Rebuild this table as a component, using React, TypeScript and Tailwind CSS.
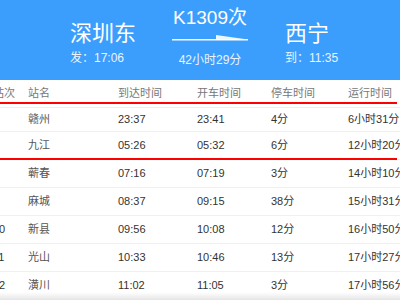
import React from 'react';

interface Stop {
  no: number;
  name: string;
  arrive: string;
  depart: string;
  stay: string;
  run: string;
}

const stops: Stop[] = [
  { no: 6, name: '赣州', arrive: '23:37', depart: '23:41', stay: '4分', run: '6小时31分' },
  { no: 7, name: '九江', arrive: '05:26', depart: '05:32', stay: '6分', run: '12小时20分' },
  { no: 8, name: '蕲春', arrive: '07:16', depart: '07:19', stay: '3分', run: '14小时10分' },
  { no: 9, name: '麻城', arrive: '08:37', depart: '09:15', stay: '38分', run: '15小时31分' },
  { no: 10, name: '新县', arrive: '09:56', depart: '10:08', stay: '12分', run: '16小时50分' },
  { no: 11, name: '光山', arrive: '10:33', depart: '10:46', stay: '13分', run: '17小时27分' },
  { no: 12, name: '潢川', arrive: '11:02', depart: '11:05', stay: '3分', run: '17小时56分' },
];

const cols = 'grid grid-cols-[35px_90px_79px_74px_77px_1fr] items-center -ml-[7px] whitespace-nowrap';

export default function App() {
  return (
    <div
      className="w-[400px] h-[300px] overflow-hidden bg-white relative"
      style={{ fontFamily: '"Liberation Sans", "Noto Sans CJK SC", sans-serif' }}
    >
      <header className="h-[80px] bg-[#3b9efd] text-white flex whitespace-nowrap">
        <div className="ml-[70px] w-[102px] pt-[23px]">
          <div className="text-[22px] leading-none">深圳东</div>
          <div className="text-[12px] leading-none mt-[7px] text-[#eaf4ff]">发：17:06</div>
        </div>
        <div className="w-[76px] flex flex-col items-center pt-[8px]">
          <div className="text-[19px] leading-none">K1309次</div>
          <svg width="76" height="10" viewBox="0 0 76 10" className="mt-[6px] shrink-0">
            <rect x="0" y="6" width="76" height="1.5" fill="#fff" />
            <polygon points="44,2 76,6.5 44,7" fill="#fff" opacity="0.9" />
          </svg>
          <div className="text-[12px] leading-none mt-[11px] text-[#eaf4ff]">42小时29分</div>
        </div>
        <div className="ml-[37px] pt-[23px]">
          <div className="text-[22px] leading-none">西宁</div>
          <div className="text-[12px] leading-none mt-[7px] text-[#eaf4ff]">到：11:35</div>
        </div>
      </header>

      <div className="relative text-[11px]">
        <div className={`${cols} h-[28px] border-b border-[#eeeeee] text-[#777]`}>
          <span>站次</span>
          <span>站名</span>
          <span>到达时间</span>
          <span>开车时间</span>
          <span>停车时间</span>
          <span>运行时间</span>
        </div>
        {stops.map((s, i) => (
          <div
            key={s.no}
            className={`${cols} ${i === 0 ? 'h-[24px]' : 'h-[28px]'} border-b border-[#f0f0f0] text-[#333]`}
          >
            <span>{s.no}</span>
            <span className="text-[#555]">{s.name}</span>
            <span>{s.arrive}</span>
            <span>{s.depart}</span>
            <span>{s.stay}</span>
            <span>{s.run}</span>
          </div>
        ))}
        <div className="absolute left-0 top-[22px] w-[397px] h-[58px] border-y-[2.5px] border-[#ff0000] pointer-events-none" />
      </div>

      <div className="absolute left-0 bottom-0 w-full h-[8px] bg-gradient-to-b from-transparent to-[#e6e6e6]" />
    </div>
  );
}
